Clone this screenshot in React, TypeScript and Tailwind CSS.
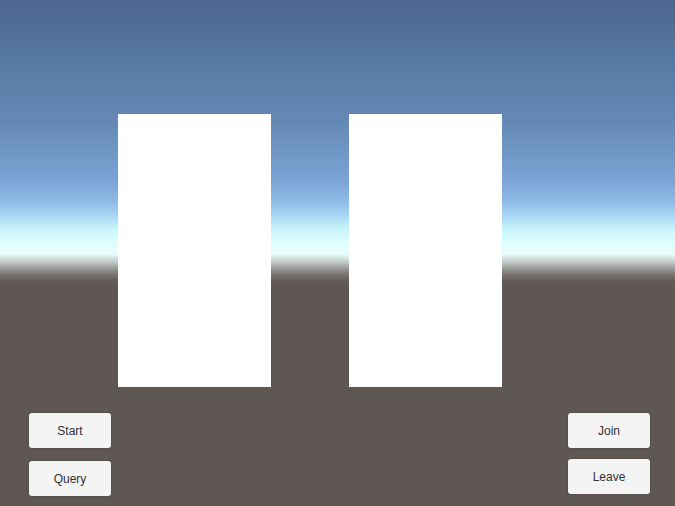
export default function App() {
    return (
        <div className="flex h-[506px] w-[675px] flex-col overflow-hidden bg-[linear-gradient(to_bottom,#4a668e_0px,#577aa3_60px,#6488b4_120px,#7ba3d4_180px,#8cb9e5_200px,#a8d8f5_216px,#cbf6fc_230px,#e0fdfd_244px,#e8fcfc_254px,#c6d2d0_261px,#9c9e9b_268px,#77716d_275px,#645c58_281px,#5f5753_287px,#5f5753_506px)] font-['Liberation_Sans',Arial,sans-serif]">
            {/* two blank cards */}
            <div className="ml-[118px] mt-[114px] flex gap-[78px]">
                <div className="h-[273px] w-[153px] bg-white" />
                <div className="h-[273px] w-[153px] bg-white" />
            </div>

            {/* control buttons */}
            <div className="mt-[26px] flex justify-between pl-[29px] pr-[25px]">
                <div className="flex flex-col gap-[13px]">
                    <Btn label="Start" />
                    <Btn label="Query" />
                </div>
                <div className="flex flex-col gap-[11px]">
                    <Btn label="Join" />
                    <Btn label="Leave" />
                </div>
            </div>
        </div>
    );
}

function Btn({ label }: { label: string }) {
    return (
        <button className="flex h-[35px] w-[82px] items-center justify-center rounded-[3px] bg-[#f4f4f4] text-[12px] text-[#323232] shadow-[0_0_0_1px_rgba(0,0,0,0.08)]">
            {label}
        </button>
    );
}
